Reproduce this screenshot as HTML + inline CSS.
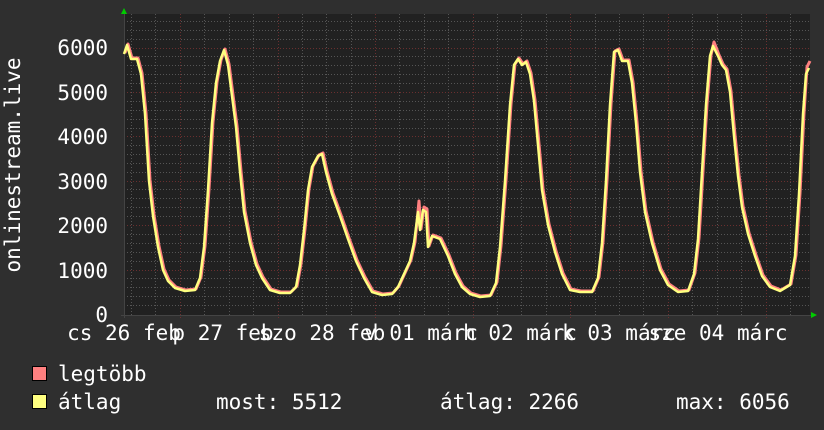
<!DOCTYPE html>
<html><head><meta charset="utf-8"><style>
html,body{margin:0;padding:0;background:#2f2f2f;width:824px;height:430px;overflow:hidden}
svg{display:block}
text{font-family:"DejaVu Sans Mono","Liberation Mono",monospace;font-size:21px;fill:#fff}
</style></head><body>
<svg width="824" height="430" viewBox="0 0 824 430">
<rect x="0" y="0" width="824" height="430" fill="#2f2f2f"/>
<rect x="124" y="14" width="686" height="301" fill="#212121"/>
<g stroke="#555" stroke-width="1" stroke-dasharray="1,2">
<line x1="124" x2="810" y1="305.5" y2="305.5"/><line x1="124" x2="810" y1="296.5" y2="296.5"/><line x1="124" x2="810" y1="287.5" y2="287.5"/><line x1="124" x2="810" y1="278.5" y2="278.5"/>
<line x1="124" x2="810" y1="261.5" y2="261.5"/><line x1="124" x2="810" y1="252.5" y2="252.5"/><line x1="124" x2="810" y1="243.5" y2="243.5"/><line x1="124" x2="810" y1="234.5" y2="234.5"/>
<line x1="124" x2="810" y1="216.5" y2="216.5"/><line x1="124" x2="810" y1="207.5" y2="207.5"/><line x1="124" x2="810" y1="198.5" y2="198.5"/><line x1="124" x2="810" y1="189.5" y2="189.5"/>
<line x1="124" x2="810" y1="172.5" y2="172.5"/><line x1="124" x2="810" y1="163.5" y2="163.5"/><line x1="124" x2="810" y1="154.5" y2="154.5"/><line x1="124" x2="810" y1="145.5" y2="145.5"/>
<line x1="124" x2="810" y1="128.5" y2="128.5"/><line x1="124" x2="810" y1="119.5" y2="119.5"/><line x1="124" x2="810" y1="110.5" y2="110.5"/><line x1="124" x2="810" y1="101.5" y2="101.5"/>
<line x1="124" x2="810" y1="83.5" y2="83.5"/><line x1="124" x2="810" y1="74.5" y2="74.5"/><line x1="124" x2="810" y1="65.5" y2="65.5"/><line x1="124" x2="810" y1="56.5" y2="56.5"/>
<line x1="124" x2="810" y1="39.5" y2="39.5"/><line x1="124" x2="810" y1="30.5" y2="30.5"/><line x1="124" x2="810" y1="21.5" y2="21.5"/>
<line y1="14" y2="315" x1="131.5" x2="131.5"/><line y1="14" y2="315" x1="155.5" x2="155.5"/><line y1="14" y2="315" x1="204.5" x2="204.5"/><line y1="14" y2="315" x1="229.5" x2="229.5"/><line y1="14" y2="315" x1="253.5" x2="253.5"/>
<line y1="14" y2="315" x1="302.5" x2="302.5"/><line y1="14" y2="315" x1="326.5" x2="326.5"/><line y1="14" y2="315" x1="351.5" x2="351.5"/><line y1="14" y2="315" x1="399.5" x2="399.5"/><line y1="14" y2="315" x1="424.5" x2="424.5"/><line y1="14" y2="315" x1="448.5" x2="448.5"/>
<line y1="14" y2="315" x1="497.5" x2="497.5"/><line y1="14" y2="315" x1="521.5" x2="521.5"/><line y1="14" y2="315" x1="546.5" x2="546.5"/><line y1="14" y2="315" x1="595.5" x2="595.5"/><line y1="14" y2="315" x1="619.5" x2="619.5"/><line y1="14" y2="315" x1="643.5" x2="643.5"/>
<line y1="14" y2="315" x1="692.5" x2="692.5"/><line y1="14" y2="315" x1="717.5" x2="717.5"/><line y1="14" y2="315" x1="741.5" x2="741.5"/><line y1="14" y2="315" x1="790.5" x2="790.5"/>
</g>
<g stroke="#6a2f2f" stroke-width="1" stroke-dasharray="1,2">
<line x1="124" x2="810" y1="270.5" y2="270.5"/><line x1="124" x2="810" y1="225.5" y2="225.5"/><line x1="124" x2="810" y1="181.5" y2="181.5"/><line x1="124" x2="810" y1="136.5" y2="136.5"/><line x1="124" x2="810" y1="92.5" y2="92.5"/><line x1="124" x2="810" y1="48.5" y2="48.5"/>
<line y1="14" y2="318" x1="180.5" x2="180.5"/><line y1="14" y2="318" x1="278.5" x2="278.5"/><line y1="14" y2="318" x1="375.5" x2="375.5"/><line y1="14" y2="318" x1="473.5" x2="473.5"/><line y1="14" y2="318" x1="570.5" x2="570.5"/><line y1="14" y2="318" x1="668.5" x2="668.5"/><line y1="14" y2="318" x1="766.5" x2="766.5"/>
</g>
<line x1="121" x2="813" y1="315.5" y2="315.5" stroke="#444"/>
<line x1="124.5" x2="124.5" y1="12" y2="318" stroke="#444"/>
<polygon points="121,14 127,14 124,8" fill="#0c0"/>
<polygon points="811,312 811,318 817,315" fill="#0c0"/>
<g id="c" fill="none" stroke-linejoin="round">
<polyline id="p" stroke="#ff8080" stroke-width="3" transform="translate(1,-1)" points="124,54 127,45 131,59 137,59 141,74 145,114 149,181 153,216 158,247 163,270 168,281 175,288 185,291 195,290 200,278 204,247 208,190 212,123 216,83 220,61 224,50 228,65 232,96 236,127 240,172 244,212 250,243 256,265 262,278 270,290 280,293 290,293 296,287 300,265 304,230 308,190 312,167 318,156 322,154 326,172 332,194 340,216 348,239 356,261 364,278 372,292 382,295 392,294 398,287 404,274 410,261 414,243 418,202 420,230 423,208 426,210 428,247 432,236 440,239 448,256 455,274 462,287 470,294 480,297 490,296 496,283 500,247 505,181 510,105 514,65 518,59 522,65 526,62 530,74 534,101 538,145 542,190 548,225 555,252 562,274 570,290 580,292 592,292 598,278 602,243 606,181 610,105 614,52 618,50 622,61 628,61 632,83 636,123 640,172 645,212 652,243 660,270 668,285 678,292 688,291 694,274 698,239 702,172 706,105 710,56 713,43 718,56 722,65 726,70 730,92 734,136 738,176 742,207 748,234 755,256 762,276 770,287 780,291 790,285 795,256 799,194 803,114 806,68 809,62"/>
<polyline stroke="#ffff80" stroke-width="2.5" points="124,54 127,45 131,59 137,59 141,74 145,114 149,181 153,216 158,247 163,270 168,281 175,288 185,291 195,290 200,278 204,247 208,190 212,123 216,83 220,61 224,50 228,65 232,96 236,127 240,172 244,212 250,243 256,265 262,278 270,290 280,293 290,293 296,287 300,265 304,230 308,190 312,167 318,156 322,154 326,172 332,194 340,216 348,239 356,261 364,278 372,292 382,295 392,294 398,287 404,274 410,261 414,243 418,212 420,230 423,210 426,212 428,247 432,236 440,239 448,256 455,274 462,287 470,294 480,297 490,296 496,283 500,247 505,181 510,105 514,65 518,59 522,65 526,62 530,74 534,101 538,145 542,190 548,225 555,252 562,274 570,290 580,292 592,292 598,278 602,243 606,181 610,105 614,52 618,50 622,61 628,61 632,83 636,123 640,172 645,212 652,243 660,270 668,285 678,292 688,291 694,274 698,239 702,172 706,105 710,56 713,46 718,56 722,65 726,70 730,92 734,136 738,176 742,207 748,234 755,256 762,276 770,287 780,291 790,285 795,256 799,194 803,114 806,74 809,68"/>
</g>
<g text-anchor="end">
<text x="108" y="55">6000</text><text x="108" y="100">5000</text><text x="108" y="144">4000</text><text x="108" y="189">3000</text><text x="108" y="233">2000</text><text x="108" y="278">1000</text><text x="108" y="322">0</text>
</g>
<text transform="translate(20,165) rotate(-90)" text-anchor="middle">onlinestream.live</text>
<g text-anchor="middle">
<text x="124" y="340">cs 26 feb</text><text x="223" y="340">p 27 feb</text><text x="322" y="340">szo 28 feb</text><text x="421" y="340">v 01 márc</text><text x="520" y="340">h 02 márc</text><text x="619" y="340">k 03 márc</text><text x="718" y="340">sze 04 márc</text>
</g>
<rect x="32.5" y="366.5" width="14" height="14" fill="#ff8080" stroke="#000"/>
<rect x="32.5" y="394.5" width="14" height="14" fill="#ffff80" stroke="#000"/>
<text x="58" y="381">legtöbb</text>
<text x="58" y="409">átlag</text>
<text x="216" y="409">most: 5512</text>
<text x="440" y="409">átlag: 2266</text>
<text x="676" y="409">max: 6056</text>
</svg>
</body></html>
